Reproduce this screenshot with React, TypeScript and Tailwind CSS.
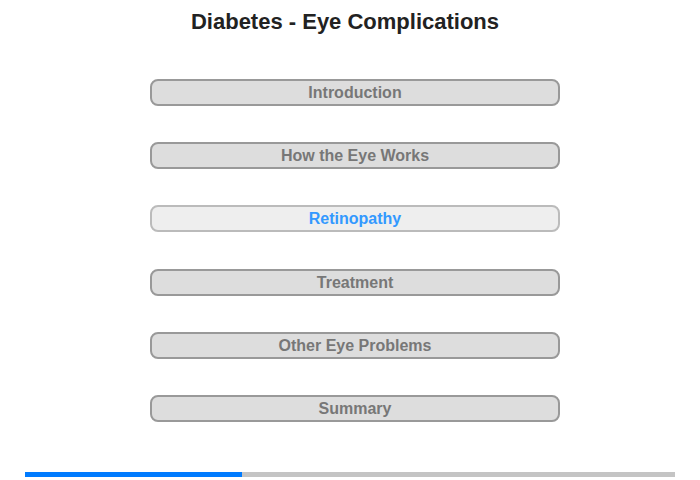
import React from "react";

const sections = [
  { label: "Introduction", active: false, gap: "mt-0" },
  { label: "How the Eye Works", active: false, gap: "mt-[36px]" },
  { label: "Retinopathy", active: true, gap: "mt-[36px]" },
  { label: "Treatment", active: false, gap: "mt-[37px]" },
  { label: "Other Eye Problems", active: false, gap: "mt-[36px]" },
  { label: "Summary", active: false, gap: "mt-[36px]" },
];

const App: React.FC = () => {
  return (
    <div className="h-[480px] w-[700px] bg-white font-['Liberation_Sans',Arial,sans-serif]">
      <h1 className="pr-[10px] pt-[9px] text-center text-[22px] font-bold leading-[26px] text-[#222]">
        Diabetes - Eye Complications
      </h1>

      <div className="mt-[44px] flex flex-col pl-[150px]">
        {sections.map((s) => (
          <button
            key={s.label}
            className={`${s.gap} h-[27px] w-[410px] rounded-[8px] border-2 text-[16px] font-bold leading-[23px] ${
              s.active
                ? "border-[#bbb] bg-[#eee] text-[#3399ff]"
                : "border-[#999] bg-[#ddd] text-[#777]"
            }`}
          >
            {s.label}
          </button>
        ))}
      </div>

      <div className="mx-[25px] mt-[50px] flex h-[5px] bg-[#c4c4c4]">
        <div className="h-full w-[217px] bg-[#007bff]" />
      </div>
    </div>
  );
};

export default App;
